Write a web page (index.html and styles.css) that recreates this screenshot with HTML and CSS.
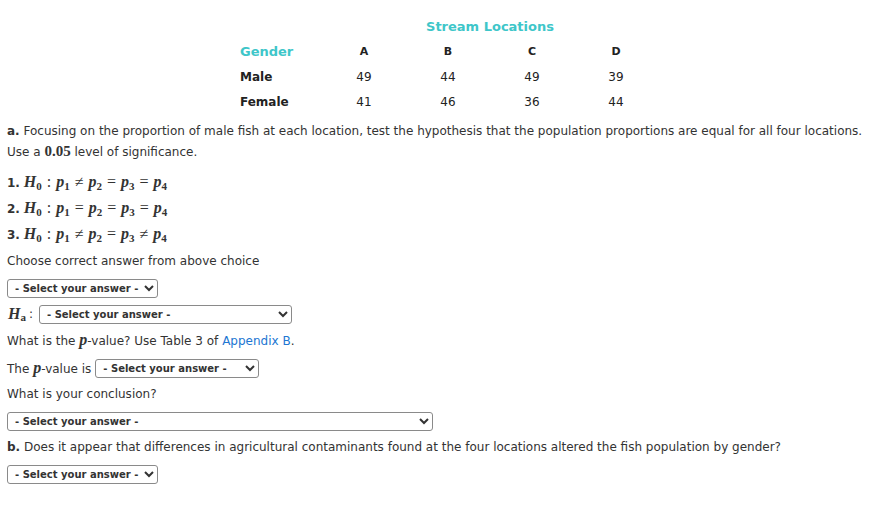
FILE: index.html
```html
<!DOCTYPE html>
<html>
<head>
<meta charset="utf-8">
<link rel="stylesheet" href="styles.css">
</head>
<body>
<div class="page">
  <table class="data">
    <tr><td></td><td colspan="4" class="title">Stream Locations</td></tr>
    <tr><td class="label teal">Gender</td><td class="hc">A</td><td class="hc">B</td><td class="hc">C</td><td class="hc">D</td></tr>
    <tr><td class="label">Male</td><td>49</td><td>44</td><td>49</td><td>39</td></tr>
    <tr><td class="label">Female</td><td>41</td><td>46</td><td>36</td><td>44</td></tr>
  </table>

  <p class="para"><b>a.</b> Focusing on the proportion of male fish at each location, test the hypothesis that the population proportions are equal for all four locations.<br><span>Use a </span><span class="mnum">0.05</span><span> level of significance.</span></p>

  <div class="opts">
    <p class="line"><b>1.</b> <span class="m"><i>H</i><sub>0</sub><span class="op">:</span><i>p</i><sub>1</sub><span class="op">≠</span><i>p</i><sub>2</sub><span class="op">=</span><i>p</i><sub>3</sub><span class="op">=</span><i>p</i><sub>4</sub></span></p>
    <p class="line"><b>2.</b> <span class="m"><i>H</i><sub>0</sub><span class="op">:</span><i>p</i><sub>1</sub><span class="op">=</span><i>p</i><sub>2</sub><span class="op">=</span><i>p</i><sub>3</sub><span class="op">=</span><i>p</i><sub>4</sub></span></p>
    <p class="line"><b>3.</b> <span class="m"><i>H</i><sub>0</sub><span class="op">:</span><i>p</i><sub>1</sub><span class="op">≠</span><i>p</i><sub>2</sub><span class="op">=</span><i>p</i><sub>3</sub><span class="op">≠</span><i>p</i><sub>4</sub></span></p>
  </div>

  <p class="line mt1">Choose correct answer from above choice</p>
  <div class="row mt1"><select class="sel w150"><option>- Select your answer -</option></select></div>
  <div class="row"><span class="m ha"><i>H</i><sub>a</sub></span><span class="colon">:</span><select class="sel w252"><option>- Select your answer -</option></select></div>

  <p class="line">What is the <span class="m"><i>p</i></span>-value? Use Table 3 of <a class="link" href="#">Appendix B</a>.</p>
  <div class="row mt2"><span class="lbl">The <span class="m"><i>p</i></span>-value is</span><select class="sel w163"><option>- Select your answer -</option></select></div>
  <p class="line">What is your conclusion?</p>
  <div class="row mt1"><select class="sel w425"><option>- Select your answer -</option></select></div>

  <p class="line"><b>b.</b> Does it appear that differences in agricultural contaminants found at the four locations altered the fish population by gender?</p>
  <div class="row mt1"><select class="sel w150"><option>- Select your answer -</option></select></div>
</div>
</body>
</html>
```
FILE: styles.css
```css
html, body { margin: 0; padding: 0; background: #fff; }
body {
  font-family: "DejaVu Sans", Verdana, sans-serif;
  font-size: 12px;
  color: #333;
}
.page { padding: 14px 7px 0 7px; }
.data {
  border-collapse: collapse;
  margin: 0 0 0 227px;
}
.data td {
  width: 84px;
  height: 25px;
  padding: 0;
  text-align: center;
  vertical-align: middle;
  font-size: 12px;
  color: #222;
}
.data td.label { width: 82px; text-align: left; padding-left: 6px; font-weight: bold; }
.data td.teal, .data td.title { color: #3ec6c9; font-weight: bold; font-size: 13px; }
.data td.hc { font-weight: bold; font-size: 11px; }
.para { margin: 7px 0 0 0; line-height: 21px; }
.mnum { font-family: "Liberation Serif", "DejaVu Serif", serif; font-size: 15px; font-weight: bold; line-height: 1; }
.opts { margin-top: 6px; }
.line { margin: 0; height: 26px; line-height: 26px; white-space: nowrap; }
.m { font-family: "Liberation Serif", "DejaVu Serif", serif; font-size: 16px; }
.m i { font-style: italic; font-weight: bold; }
.m sub { font-size: 11px; font-style: normal; vertical-align: -3px; line-height: 0; font-weight: bold; }
.m .op { padding: 0 5px; font-weight: normal; }
.ha sub { vertical-align: -2px; }
.row { display: flex; align-items: center; gap: 4px; height: 26px; }
.mt1 { margin-top: 1px; }
.mt2 { margin-top: 2px; }
.ha { padding-left: 1px; }
.colon { margin: 0 2px 0 -1px; }
.sel {
  font-family: "DejaVu Sans", Verdana, sans-serif;
  font-size: 10px;
  font-weight: bold;
  color: #333;
  height: 19px;
  padding: 0 1px 0 3px;
  border: 1px solid #8a8a8a;
  border-radius: 3px;
  background: #fff;
}
.w150 { width: 151px; }
.w252 { width: 253px; }
.w163 { width: 164px; }
.w425 { width: 426px; }
.link { color: #2176d2; text-decoration: none; }
```
